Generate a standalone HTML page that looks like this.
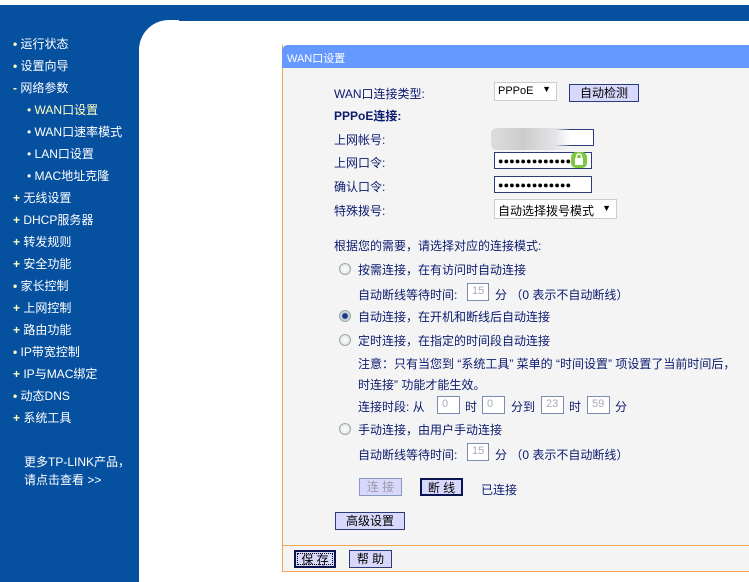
<!DOCTYPE html>
<html><head><meta charset="utf-8">
<style>
*{margin:0;padding:0;box-sizing:border-box}
body{width:749px;height:582px;position:relative;overflow:hidden;background:#fff;font-family:"Liberation Sans","WenQuanYi Zen Hei","Noto Sans CJK SC",sans-serif;font-size:12px;color:#0b1a6e}
.a{position:absolute;white-space:nowrap}
#top{position:absolute;left:0;top:5px;width:749px;height:16px;background:#0650a0}
#side{position:absolute;left:0;top:5px;width:139px;height:577px;background:#0650a0}
#cb{position:absolute;left:139px;top:20px;width:40px;height:40px;background:#0650a0}
#corner{position:absolute;left:139px;top:20px;width:40px;height:40px;background:#fff;border-top-left-radius:30px}
#side .a{color:#fff;font-size:12px}
.sub{color:#ffffc0 !important}
.b{color:#ffffc0;font-weight:bold}
#panel{position:absolute;left:282px;top:45px;width:480px;height:527px;background:#f4f4f4;border:1px solid #f0a850;border-top:none}
#ph{position:absolute;left:282px;top:45px;width:467px;height:23px;background:#6699ff;border-top-left-radius:6px;color:#fff;font-size:11px;padding:5px 0 0 5px}
.inp{position:absolute;height:17px;background:#fff;border:1px solid #2a3c7c}
.sm{position:absolute;height:18px;background:#fff;border:1px solid #7a8cb0;color:#aab;font-size:11px;padding:1px 0 0 4px}
.btn{position:absolute;height:18px;background:#d8d8fc;border:1px solid #2a3c7c;text-align:center;font-size:12px;line-height:16px;color:#000}
.rad{position:absolute;width:12px;height:12px;border-radius:50%;border:1px solid #9aa;background:radial-gradient(#fff,#ddd)}
.dots{font-size:9px;letter-spacing:0.2px;color:#000;padding:2px 0 0 3px;line-height:12px}
</style></head><body>
<div id="top"></div>
<div id="side">
<div class="a" style="left:13px;top:30px"><span class="b">•</span> 运行状态</div>
<div class="a" style="left:13px;top:52px"><span class="b">•</span> 设置向导</div>
<div class="a" style="left:13px;top:74px"><span class="b">-</span> 网络参数</div>
<div class="a sub" style="left:27px;top:96px">• WAN口设置</div>
<div class="a" style="left:27px;top:118px">• WAN口速率模式</div>
<div class="a" style="left:27px;top:140px">• LAN口设置</div>
<div class="a" style="left:27px;top:162px">• MAC地址克隆</div>
<div class="a" style="left:13px;top:184px"><span class="b">+</span> 无线设置</div>
<div class="a" style="left:13px;top:206px"><span class="b">+</span> DHCP服务器</div>
<div class="a" style="left:13px;top:228px"><span class="b">+</span> 转发规则</div>
<div class="a" style="left:13px;top:250px"><span class="b">+</span> 安全功能</div>
<div class="a" style="left:13px;top:272px"><span class="b">•</span> 家长控制</div>
<div class="a" style="left:13px;top:294px"><span class="b">+</span> 上网控制</div>
<div class="a" style="left:13px;top:316px"><span class="b">+</span> 路由功能</div>
<div class="a" style="left:13px;top:338px"><span class="b">•</span> IP带宽控制</div>
<div class="a" style="left:13px;top:360px"><span class="b">+</span> IP与MAC绑定</div>
<div class="a" style="left:13px;top:382px"><span class="b">•</span> 动态DNS</div>
<div class="a" style="left:13px;top:404px"><span class="b">+</span> 系统工具</div>
<div class="a" style="left:24px;top:448px">更多TP-LINK产品，</div>
<div class="a" style="left:24px;top:466px">请点击查看 &gt;&gt;</div>
</div>
<div id="cb"></div>
<div id="corner"></div>
<div id="panel"></div>
<div id="ph">WAN口设置</div>

<div class="a" style="left:334px;top:85px">WAN口连接类型:</div>
<div class="inp" style="left:494px;top:82px;width:63px;height:19px;border-color:#ccc;color:#000;padding:2px 0 0 3px;font-size:11px">PPPoE<span style="position:absolute;right:5px;top:1px;font-size:9px">▼</span></div>
<div class="btn" style="left:569px;top:84px;width:70px">自动检测</div>
<div class="a" style="left:334px;top:107px;font-weight:bold">PPPoE连接:</div>
<div class="a" style="left:334px;top:131px">上网帐号:</div>
<div class="inp" style="left:494px;top:129px;width:100px"></div>
<div class="a" style="left:491px;top:128px;width:80px;height:22px;background:linear-gradient(90deg,#ddd,#ccc 40%,#e4e4e8 80%,rgba(240,240,240,0));border-radius:6px"></div>
<div class="a" style="left:334px;top:154px">上网口令:</div>
<div class="inp dots" style="left:494px;top:152px;width:98px">●●●●●●●●●●●●●</div>
<svg class="a" style="left:570px;top:151px" width="18" height="18"><rect x="1" y="1" width="16" height="16" rx="5" fill="#7cc840"/><rect x="5" y="7" width="8" height="7" fill="#fff"/><path d="M6.5 7V5.5a2.5 2.5 0 0 1 5 0V7" stroke="#fff" stroke-width="1.5" fill="none"/></svg>
<div class="a" style="left:334px;top:178px">确认口令:</div>
<div class="inp dots" style="left:494px;top:176px;width:98px">●●●●●●●●●●●●●</div>
<div class="a" style="left:334px;top:202px">特殊拨号:</div>
<div class="inp" style="left:494px;top:199px;width:123px;height:20px;border-color:#ccc;color:#000;padding:2px 0 0 3px">自动选择拨号模式<span style="position:absolute;right:5px;top:3px;font-size:9px">▼</span></div>

<div class="a" style="left:334px;top:237px">根据您的需要，请选择对应的连接模式:</div>
<div class="rad" style="left:339px;top:263px"></div>
<div class="a" style="left:358px;top:261px">按需连接，在有访问时自动连接</div>
<div class="a" style="left:358px;top:286px">自动断线等待时间:</div>
<div class="sm" style="left:467px;top:283px;width:22px">15</div>
<div class="a" style="left:495px;top:286px">分 （0 表示不自动断线）</div>
<div class="rad" style="left:339px;top:310px;background:radial-gradient(#1a3c7c 35%,#bcd 45%,#eee)"></div>
<div class="a" style="left:358px;top:308px">自动连接，在开机和断线后自动连接</div>
<div class="rad" style="left:339px;top:334px"></div>
<div class="a" style="left:358px;top:332px">定时连接，在指定的时间段自动连接</div>
<div class="a" style="left:358px;top:355px">注意：只有当您到 “系统工具” 菜单的 “时间设置” 项设置了当前时间后，</div>
<div class="a" style="left:358px;top:376px">时连接” 功能才能生效。</div>
<div class="a" style="left:358px;top:398px">连接时段: 从</div>
<div class="sm" style="left:437px;top:396px;width:23px">0</div>
<div class="a" style="left:465px;top:398px">时</div>
<div class="sm" style="left:482px;top:396px;width:23px">0</div>
<div class="a" style="left:511px;top:398px">分到</div>
<div class="sm" style="left:541px;top:396px;width:23px">23</div>
<div class="a" style="left:569px;top:398px">时</div>
<div class="sm" style="left:587px;top:396px;width:23px">59</div>
<div class="a" style="left:615px;top:398px">分</div>
<div class="rad" style="left:339px;top:423px"></div>
<div class="a" style="left:358px;top:421px">手动连接，由用户手动连接</div>
<div class="a" style="left:358px;top:446px">自动断线等待时间:</div>
<div class="sm" style="left:467px;top:443px;width:22px">15</div>
<div class="a" style="left:495px;top:446px">分 （0 表示不自动断线）</div>
<div class="btn" style="left:359px;top:478px;width:43px;color:#99a;border-color:#8898c0">连 接</div>
<div class="btn" style="left:420px;top:478px;width:43px;border:2px solid #0a1450">断 线</div>
<div class="a" style="left:481px;top:481px">已连接</div>
<div class="btn" style="left:335px;top:512px;width:70px">高级设置</div>
<div class="a" style="left:283px;top:545px;width:466px;height:1px;background:#f0a850"></div>
<div class="btn" style="left:294px;top:550px;width:42px;border:2px solid #0a1450;outline:1px dotted #000;outline-offset:-4px">保 存</div>
<div class="btn" style="left:349px;top:550px;width:43px">帮 助</div>
</body></html>
